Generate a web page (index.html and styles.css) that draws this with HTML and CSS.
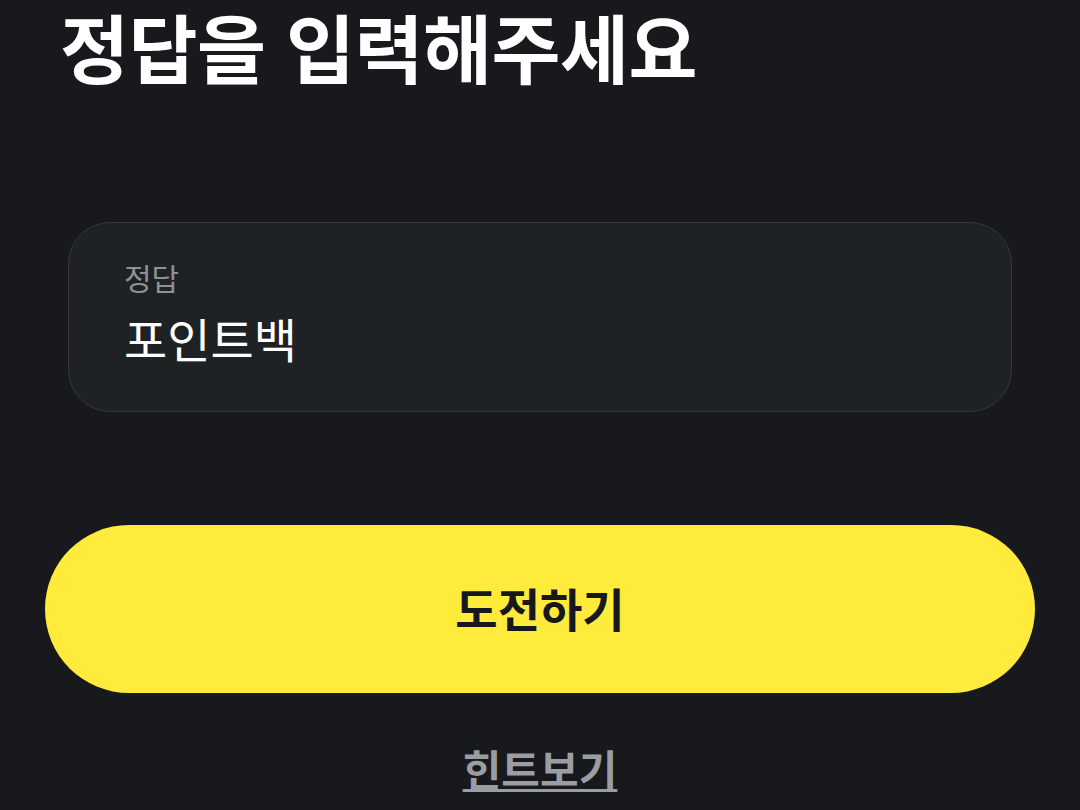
FILE: index.html
```html
<!DOCTYPE html>
<html lang="ko">
<head>
  <meta charset="UTF-8" />
  <meta name="viewport" content="width=device-width, initial-scale=1.0"/>
  <title>정답 입력</title>
  <link rel="stylesheet" href="styles.css">
</head>
<body>
  <main class="page">
    <h1 class="title">정답을 입력해주세요</h1>

    <label class="field">
      <span class="field-label">정답</span>
      <input class="field-input" type="text" value="포인트백" />
    </label>

    <button class="submit" type="button">도전하기</button>

    <a class="hint" href="#">힌트보기</a>
  </main>
</body>
</html>
```

FILE: styles.css
```css
html, body {
  margin: 0;
  background-color: #17191c;
}
body {
  font-family: "Noto Sans CJK KR", "Noto Sans", sans-serif;
  color: #ffffff;
}
.page {
  display: flex;
  flex-direction: column;
  padding: 0 45px;
}
.title {
  margin: 0 0 0 15px;
  font-size: 75px;
  font-weight: 700;
  line-height: 92px;
  letter-spacing: -0.5px;
}
.field {
  display: flex;
  flex-direction: column;
  margin: 130px 23px 0;
  height: 190px;
  box-sizing: border-box;
  padding: 34px 55px 0;
  background-color: #1f2225;
  border: 1px solid #34373b;
  border-radius: 42px;
}
.field-label {
  font-size: 30px;
  line-height: 40px;
  color: #8e9196;
}
.field-input {
  margin-top: 9px;
  padding: 0;
  border: none;
  outline: none;
  background: transparent;
  font-family: inherit;
  font-size: 47px;
  line-height: 64px;
  color: #ffffff;
}
.submit {
  margin-top: 113px;
  height: 168px;
  padding-bottom: 5px;
  border: none;
  border-radius: 84px;
  background-color: #ffeb3b;
  font-family: inherit;
  font-size: 46px;
  font-weight: 700;
  color: #16181b;
  cursor: pointer;
}
.hint {
  align-self: center;
  margin-top: 45px;
  font-size: 42px;
  font-weight: 700;
  line-height: 60px;
  color: #9a9da2;
  text-decoration: underline;
  text-underline-offset: 3px;
  text-decoration-thickness: 3px;
}
```
